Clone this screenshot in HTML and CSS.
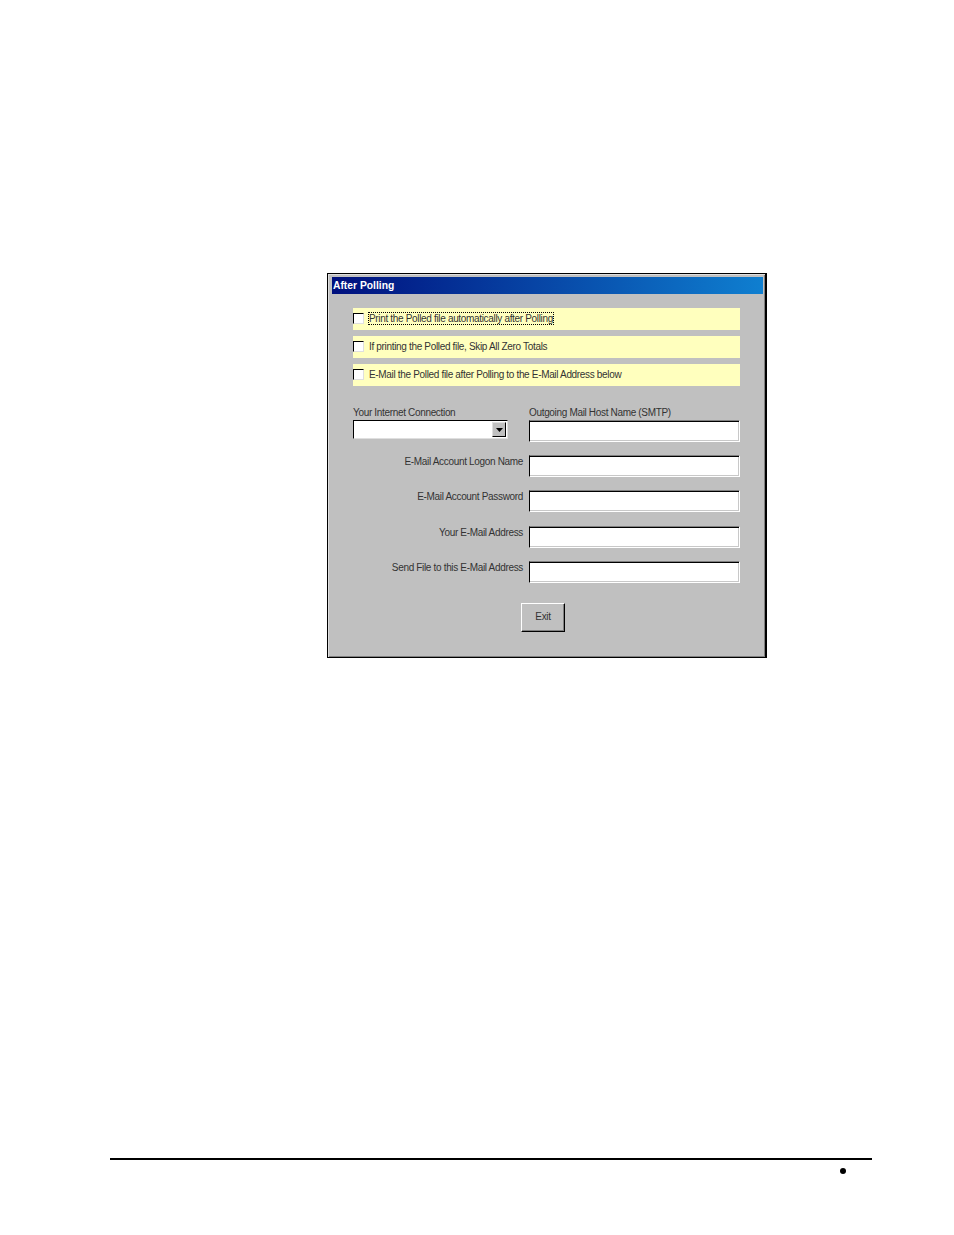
FILE: index.html
```html
<!DOCTYPE html>
<html lang="en">
  <head>
    <meta charset="UTF-8" />
    <title>After Polling</title>
    <link rel="stylesheet" href="styles.css">
  </head>
  <body>
    <main class="window">
      <div class="titlebar">After Polling</div>

      <div class="options">
        <label class="option">
          <input type="checkbox" class="check" />
          <span class="focused">Print the Polled file automatically after Polling</span>
        </label>
        <label class="option">
          <input type="checkbox" class="check" />
          <span>If printing the Polled file, Skip All Zero Totals</span>
        </label>
        <label class="option">
          <input type="checkbox" class="check" />
          <span>E-Mail the Polled file after Polling to the E-Mail Address below</span>
        </label>
      </div>

      <div class="top-fields">
        <div class="top-field">
          <div class="top-label">Your Internet Connection</div>
          <div class="combo">
            <span class="combo-btn">
              <svg width="7" height="4" viewBox="0 0 7 4"><path d="M0 0h7L3.5 4z" fill="#000" /></svg>
            </span>
          </div>
        </div>
        <div class="top-field">
          <div class="top-label">Outgoing Mail Host Name (SMTP)</div>
          <input type="text" class="field" />
        </div>
      </div>

      <div class="fields">
        <label class="field-label">E-Mail Account Logon Name</label>
        <input type="text" class="field" />
        <label class="field-label">E-Mail Account Password</label>
        <input type="text" class="field" />
        <label class="field-label">Your E-Mail Address</label>
        <input type="text" class="field" />
        <label class="field-label">Send File to this E-Mail Address</label>
        <input type="text" class="field" />
      </div>

      <div class="actions">
        <button class="btn">Exit</button>
      </div>
    </main>

    <footer class="page-footer">
      <span class="bullet"></span>
    </footer>
  </body>
</html>
```

FILE: styles.css
```css
:root {
  --face: #c0c0c0;
  --note: #ffffbe;
  --ink: #333;
  --font: "Liberation Sans", Arial, sans-serif;
}

* {
  box-sizing: border-box;
}

html,
body {
  margin: 0;
  background: #fff;
}

body {
  width: 954px;
  height: 1235px;
  padding-top: 273px;
  font-family: var(--font);
  font-size: 10px;
  letter-spacing: -0.33px;
  color: var(--ink);
}

/* the dialog */
.window {
  width: 440px;
  height: 385px;
  margin-left: 327px;
  padding: 3px 2px 0 4px;
  background: var(--face);
  border: 1px solid #000;
  border-right-width: 2px;
  box-shadow: inset 1px 1px 0 #dfdfdf, inset -1px -1px 0 #808080;
}

.titlebar {
  height: 17px;
  padding-left: 1px;
  line-height: 17px;
  font-size: 10.3px;
  font-weight: 700;
  letter-spacing: 0;
  color: #fff;
  background: linear-gradient(90deg, #00107e, #0f7fd0);
}

.options {
  display: flex;
  flex-direction: column;
  gap: 6px;
  margin: 14px 23px 0 21px;
}

.option {
  display: flex;
  align-items: center;
  height: 22px;
  padding-bottom: 2px;
  background: var(--note);
}

.check {
  appearance: none;
  flex: none;
  width: 11px;
  height: 11px;
  margin: 0 5px 0 0;
  background: #fff;
  border: 1px solid #000;
  border-right-color: #dfdfdf;
  border-bottom-color: #dfdfdf;
}

.focused {
  outline: 1px dotted #000;
}

.top-fields {
  display: flex;
  gap: 21px;
  margin: 20px 23px 0 21px;
}

.top-field:first-child {
  width: 155px;
  flex: none;
}

.top-field:last-child {
  flex: 1;
}

.top-label {
  height: 14px;
  padding-top: 1px;
  line-height: 12px;
}

.combo {
  display: flex;
  justify-content: flex-end;
  align-items: center;
  height: 19px;
  padding-right: 1px;
  background: #fff;
  border: 1px solid #000;
  border-right-color: #dfdfdf;
  border-bottom-color: #dfdfdf;
}

.combo-btn {
  display: flex;
  align-items: center;
  justify-content: center;
  width: 14px;
  height: 15px;
  background: var(--face);
  border: 1px solid;
  border-color: #dfdfdf #000 #000 #dfdfdf;
}

.field {
  display: block;
  width: 100%;
  height: 22px;
  margin: 0;
  padding: 0;
  background: #fff;
  border: 1px solid;
  border-color: #808080 #fff #fff #000;
  border-radius: 0;
  box-shadow: inset 0 1px 0 #000, inset -1px -1px 0 #c8c8c8;
}

.fields {
  display: grid;
  grid-template-columns: 170px 211px;
  grid-template-rows: 22px 23px 22px 22px;
  column-gap: 6px;
  row-gap: 13px;
  margin: 13px 0 0 21px;
}

.field-label {
  padding-top: 1px;
  line-height: 12px;
  text-align: right;
}

.actions {
  display: flex;
  justify-content: center;
  margin: 20px 0 0 -9px;
}

.btn {
  width: 44px;
  height: 29px;
  padding: 0 0 2px;
  font: inherit;
  letter-spacing: inherit;
  color: var(--ink);
  background: var(--face);
  border: 1px solid;
  border-color: #fff #000 #000 #fff;
  box-shadow: inset -1px -1px 0 #808080;
}

.page-footer {
  display: flex;
  justify-content: flex-end;
  width: 762px;
  margin: 500px 0 0 110px;
  padding: 8px 26px 0 0;
  border-top: 2px solid #000;
}

.bullet {
  width: 6px;
  height: 6px;
  border-radius: 50%;
  background: #000;
}
```
